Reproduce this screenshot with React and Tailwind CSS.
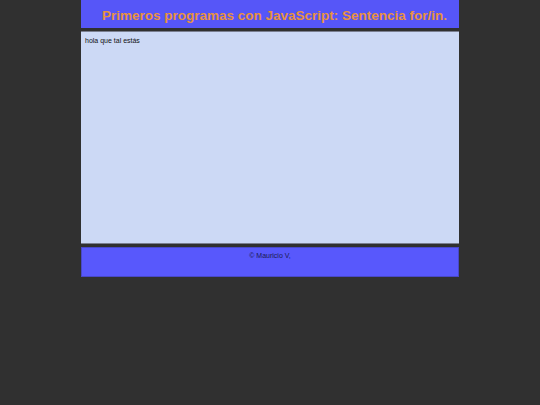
export default function App() {
  return (
    <div className="min-h-[405px] w-full bg-[#303030]" style={{ fontFamily: '"Liberation Sans", Arial, sans-serif' }}>
      <div className="mx-auto flex w-[378px] flex-col">
        <div className="flex h-[28px] items-center bg-[#5656f8] pl-[21px] pt-[3px]">
          <h1 className="whitespace-nowrap text-[13.5px] font-bold leading-none text-[#e8923e]">Primeros programas con JavaScript: Sentencia for/in.</h1>
        </div>
        <div className="mt-[3px] h-[213px] border-y border-[#7a7f90] bg-[#ccd9f5] px-[4px] pt-[4px]">
          <p className="text-[7px] leading-[9px] text-[#111]">hola que tal estás</p>
        </div>
        <div className="mt-[3px] h-[30px] border border-[#4848c8] bg-[#5858fc] pt-[3px] text-center">
          <p className="text-[7px] leading-[9px] text-[#1a1a50]">© Mauricio V,</p>
        </div>
      </div>
    </div>
  );
}
